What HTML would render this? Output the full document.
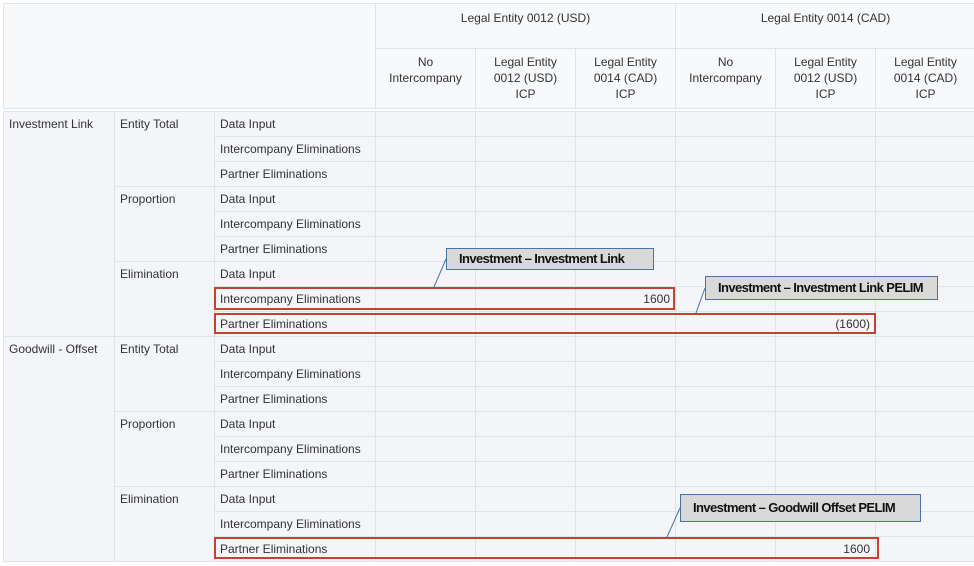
<!DOCTYPE html><html><head><style>
body{margin:0;width:974px;height:566px;background:#fff;overflow:hidden;font-family:"Liberation Sans",Arial,sans-serif;font-size:12px;color:#333;position:relative}
table{position:absolute;border-collapse:collapse;table-layout:fixed;left:3px}
td{border:1px solid #dfe4ea;background:#f3f5f8;padding:0 5px;vertical-align:top;overflow:hidden;white-space:nowrap}
#h td{background:#f8f9fb;text-align:center;vertical-align:top;white-space:normal;line-height:16px}
#h tr:nth-child(2) td{padding:5px 10px 0}
#b td{height:24px;line-height:24px}
.n{text-align:right}
.r{position:absolute;border:2px solid #c8412f;box-sizing:border-box}
.c{position:absolute;background:#d9d9d9;border:1px solid #4b73a5;box-sizing:border-box;font-family:"Liberation Sans",sans-serif;font-weight:bold;font-size:13px;color:#111;padding-left:12px;letter-spacing:-0.6px;white-space:nowrap}
</style></head><body>
<table id="h" style="top:3px;width:972px">
<colgroup><col style="width:372px"><col style="width:100px"><col style="width:100px"><col style="width:100px"><col style="width:100px"><col style="width:100px"><col style="width:100px"></colgroup>
<tr style="height:45px"><td rowspan="2" style="background:#f8f9fb"></td><td colspan="3" style="padding-top:6px">Legal Entity 0012 (USD)</td><td colspan="3" style="padding-top:6px">Legal Entity 0014 (CAD)</td></tr>
<tr style="height:60px"><td>No Intercompany</td><td>Legal Entity 0012 (USD) ICP</td><td>Legal Entity 0014 (CAD) ICP</td><td>No Intercompany</td><td>Legal Entity 0012 (USD) ICP</td><td>Legal Entity 0014 (CAD) ICP</td></tr>
</table>
<table id="b" style="top:111px;width:972px">
<colgroup><col style="width:111px"><col style="width:100px"><col style="width:161px"><col style="width:100px"><col style="width:100px"><col style="width:100px"><col style="width:100px"><col style="width:100px"><col style="width:100px"></colgroup>
<tr><td rowspan="9">Investment Link</td><td rowspan="3">Entity Total</td><td>Data Input</td><td></td><td></td><td></td><td></td><td></td><td></td></tr>
<tr><td>Intercompany Eliminations</td><td></td><td></td><td></td><td></td><td></td><td></td></tr>
<tr><td>Partner Eliminations</td><td></td><td></td><td></td><td></td><td></td><td></td></tr>
<tr><td rowspan="3">Proportion</td><td>Data Input</td><td></td><td></td><td></td><td></td><td></td><td></td></tr>
<tr><td>Intercompany Eliminations</td><td></td><td></td><td></td><td></td><td></td><td></td></tr>
<tr><td>Partner Eliminations</td><td></td><td></td><td></td><td></td><td></td><td></td></tr>
<tr><td rowspan="3">Elimination</td><td>Data Input</td><td></td><td></td><td></td><td></td><td></td><td></td></tr>
<tr><td>Intercompany Eliminations</td><td></td><td></td><td class="n">1600</td><td></td><td></td><td></td></tr>
<tr><td>Partner Eliminations</td><td></td><td></td><td></td><td></td><td class="n">(1600)</td><td></td></tr>
<tr><td rowspan="9">Goodwill - Offset</td><td rowspan="3">Entity Total</td><td>Data Input</td><td></td><td></td><td></td><td></td><td></td><td></td></tr>
<tr><td>Intercompany Eliminations</td><td></td><td></td><td></td><td></td><td></td><td></td></tr>
<tr><td>Partner Eliminations</td><td></td><td></td><td></td><td></td><td></td><td></td></tr>
<tr><td rowspan="3">Proportion</td><td>Data Input</td><td></td><td></td><td></td><td></td><td></td><td></td></tr>
<tr><td>Intercompany Eliminations</td><td></td><td></td><td></td><td></td><td></td><td></td></tr>
<tr><td>Partner Eliminations</td><td></td><td></td><td></td><td></td><td></td><td></td></tr>
<tr><td rowspan="3">Elimination</td><td>Data Input</td><td></td><td></td><td></td><td></td><td></td><td></td></tr>
<tr><td>Intercompany Eliminations</td><td></td><td></td><td></td><td></td><td></td><td></td></tr>
<tr><td>Partner Eliminations</td><td></td><td></td><td></td><td></td><td class="n">1600</td><td></td></tr>
</table>
<div class="r" style="left:214px;top:287px;width:461px;height:23px"></div>
<div class="r" style="left:214px;top:313px;width:662px;height:21px"></div>
<div class="r" style="left:214px;top:537px;width:665px;height:22px"></div>
<svg style="position:absolute;left:0;top:0" width="974" height="566"><g stroke="#4b73a5" stroke-width="1"><line x1="446" y1="259" x2="434" y2="287"/><line x1="705" y1="288" x2="696" y2="313"/><line x1="680" y1="508" x2="667" y2="537"/></g></svg>
<div class="c" style="left:446px;top:248px;width:208px;height:22px;line-height:20px">Investment – Investment Link</div>
<div class="c" style="left:705px;top:276px;width:233px;height:24px;line-height:22px">Investment – Investment Link PELIM</div>
<div class="c" style="left:680px;top:494px;width:241px;height:28px;line-height:26px">Investment – Goodwill Offset PELIM</div>
</body></html>
